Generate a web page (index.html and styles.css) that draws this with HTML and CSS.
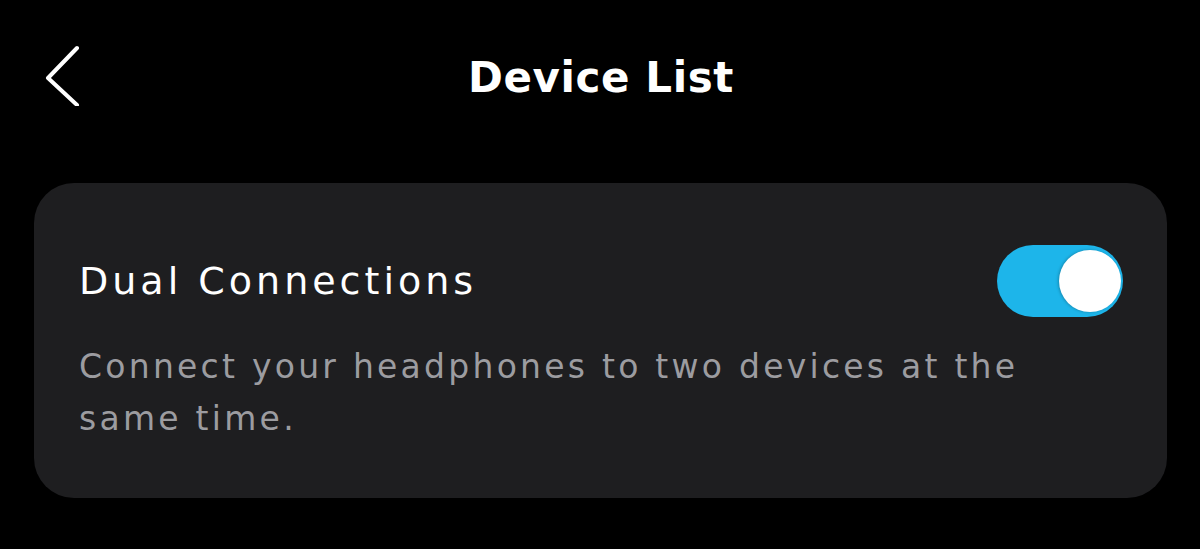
FILE: index.html
```html
<!DOCTYPE html>
<html>
<head>
<meta charset="utf-8">
<link rel="stylesheet" href="styles.css">
</head>
<body>
<header class="topbar">
  <button class="back" aria-label="Back">
    <svg width="40" height="64" viewBox="0 0 40 64"><path d="M37 6 L8 36 L37 63" fill="none" stroke="#fff" stroke-width="4" stroke-linecap="round" stroke-linejoin="round"/></svg>
  </button>
  <h1 class="title">Device List</h1>
</header>
<section class="card">
  <div class="row">
    <h2 class="label">Dual Connections</h2>
    <div class="toggle on"><span class="knob"></span></div>
  </div>
  <p class="desc">Connect your headphones to two devices at the same time.</p>
</section>
</body>
</html>
```
FILE: styles.css
```css
html, body {
  margin: 0;
  padding: 0;
  background: #000;
  width: 1200px;
  height: 549px;
  overflow: hidden;
  font-family: "DejaVu Sans", sans-serif;
}
.topbar {
  position: relative;
  height: 154px;
  display: flex;
  align-items: center;
  justify-content: center;
}
.back {
  position: absolute;
  left: 40px;
  top: 42px;
  background: none;
  border: 0;
  padding: 0;
  display: block;
}
.back svg { display: block; }
.title {
  margin: 0;
  color: #fff;
  font-size: 42px;
  font-weight: 700;
  letter-spacing: 0.6px;
  padding-left: 2px;
}
.card {
  margin: 29px 33px 0 34px;
  background: #1e1e20;
  border-radius: 40px;
  padding: 62px 44px 53px 45px;
}
.row {
  display: flex;
  align-items: center;
  justify-content: space-between;
}
.label {
  margin: 0;
  color: #fff;
  font-size: 38px;
  font-weight: 400;
  line-height: 46px;
  letter-spacing: 4px;
}
.toggle {
  width: 126px;
  height: 72px;
  border-radius: 36px;
  background: #1db5ea;
  display: flex;
  align-items: center;
  justify-content: flex-end;
  padding-right: 2px;
  box-sizing: border-box;
}
.knob {
  width: 62px;
  height: 62px;
  border-radius: 50%;
  background: #fff;
  box-shadow: -1px 0 3px rgba(0,0,0,0.25);
}
.desc {
  margin: 24px 0 0;
  max-width: 960px;
  color: #9c9ca0;
  font-size: 33px;
  line-height: 52px;
  letter-spacing: 3.25px;
}
```
